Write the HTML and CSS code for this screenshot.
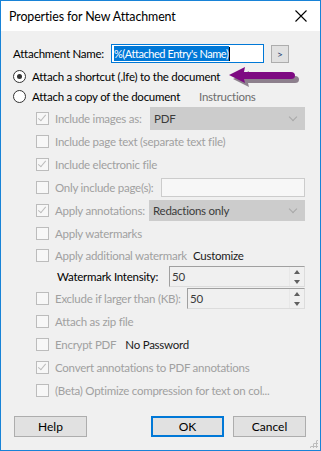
FILE: index.html
```html
<!DOCTYPE html>
<html lang="en">
<head>
    <meta charset="UTF-8">
    <meta name="viewport" content="width=device-width, initial-scale=1.0">
    <title>Properties for New Attachment</title>
    <link rel="stylesheet" href="styles.css">
</head>
<body>
    <div class="window">
        <div class="titlebar">
            <span class="title">Properties for New Attachment</span>
            <svg class="close" width="12" height="12" viewBox="0 0 12 12">
                <path d="M0.5 0.5 L11.5 11.5 M11.5 0.5 L0.5 11.5" stroke="#000" stroke-width="1.1" fill="none"/>
            </svg>
        </div>
        <div class="content">
            <div class="name-row">
                <label class="name-label">Attachment Name:</label>
                <div class="name-input"><span class="selected">%(Attached Entry's Name)</span><span class="caret"></span></div>
                <button class="small-btn">&gt;</button>
            </div>

            <div class="radio-row first">
                <span class="radio checked"></span>
                <span>Attach a shortcut (.lfe) to the document</span>
                <svg class="arrow" width="76" height="24" viewBox="0 0 76 24">
                    <path d="M4 12 L20 4 L19 9 L66 9 Q70 9 70 12.5 Q70 16 66 16 L19 16 L20 20 Z" fill="#2a102a" opacity="0.5" transform="translate(2 2)"/>
                    <path d="M2 10 L18 2 L17 7 L64 7 Q68 7 68 10.5 Q68 14 64 14 L17 14 L18 18 Z" fill="#7e0a82"/>
                </svg>
            </div>
            <div class="radio-row">
                <span class="radio"></span>
                <span>Attach a copy of the document</span>
                <span class="link-gray">Instructions</span>
            </div>

            <div class="options">
                <div class="opt h23">
                    <span class="check on"></span>
                    <span class="dis w-images">Include images as:</span>
                    <div class="combo c-images">PDF<span class="chev"></span></div>
                </div>
                <div class="opt h23">
                    <span class="check"></span>
                    <span class="dis">Include page text (separate text file)</span>
                </div>
                <div class="opt h23">
                    <span class="check on"></span>
                    <span class="dis">Include electronic file</span>
                </div>
                <div class="opt h23">
                    <span class="check"></span>
                    <span class="dis w-pages">Only include page(s):</span>
                    <div class="textbox"></div>
                </div>
                <div class="opt h23">
                    <span class="check on"></span>
                    <span class="dis w-annot">Apply annotations:</span>
                    <div class="combo">Redactions only<span class="chev"></span></div>
                </div>
                <div class="opt h23">
                    <span class="check"></span>
                    <span class="dis">Apply watermarks</span>
                </div>
                <div class="opt h21">
                    <span class="check"></span>
                    <span class="dis">Apply additional watermark</span>
                    <span class="link-dark cust">Customize</span>
                </div>
                <div class="opt h21 indent">
                    <span class="plain w-intensity">Watermark Intensity:</span>
                    <div class="spin">50<span class="spin-btns"><i class="up"></i><i class="down"></i></span></div>
                </div>
                <div class="opt h23">
                    <span class="check"></span>
                    <span class="dis w-exclude">Exclude if larger than (KB):</span>
                    <div class="spin">50<span class="spin-btns"><i class="up"></i><i class="down"></i></span></div>
                </div>
                <div class="opt h23">
                    <span class="check"></span>
                    <span class="dis">Attach as zip file</span>
                </div>
                <div class="opt h23">
                    <span class="check"></span>
                    <span class="dis">Encrypt PDF</span>
                    <span class="link-dark pw">No Password</span>
                </div>
                <div class="opt h23">
                    <span class="check on"></span>
                    <span class="dis">Convert annotations to PDF annotations</span>
                </div>
                <div class="opt h23">
                    <span class="check"></span>
                    <span class="dis">(Beta) Optimize compression for text on col...</span>
                </div>
            </div>

            <div class="buttons">
                <button class="btn">Help</button>
                <span class="spacer"></span>
                <button class="btn ok">OK</button>
                <button class="btn">Cancel</button>
            </div>
            <div class="grip"></div>
        </div>
    </div>
</body>
</html>
```

FILE: styles.css
```css
body {
    margin: 0;
    padding: 0;
    font-family: Lato, "Open Sans", sans-serif;
    font-size: 11.5px;
    letter-spacing: -0.25px;
    background-color: #f0f0f0;
    white-space: nowrap;
}

.window {
    width: 321px;
    height: 451px;
    box-sizing: border-box;
    border: 1px solid #1883d7;
    display: flex;
    flex-direction: column;
    position: relative;
}

.titlebar {
    height: 30px;
    background-color: #fff;
    display: flex;
    align-items: center;
    padding: 0 13px 0 8px;
    flex-shrink: 0;
}

.title {
    flex: 1;
    font-size: 12.4px;
    letter-spacing: -0.1px;
    color: #000;
}

.close {
    display: block;
}

.content {
    flex: 1;
    background-color: #f0f0f0;
    padding: 12px 0 0 12px;
    color: #000;
}

.name-row {
    height: 21px;
    display: flex;
    align-items: center;
}

.name-label {
    width: 98px;
    flex-shrink: 0;
}

.name-input {
    width: 149px;
    height: 17px;
    border: 1px solid #0078d7;
    background-color: #fff;
    display: flex;
    align-items: center;
    padding-left: 2px;
}

.selected {
    background-color: #0078d7;
    color: #fff;
    line-height: 15px;
    font-size: 11px;
    letter-spacing: -0.45px;
    padding-right: 1px;
}

.caret {
    width: 1px;
    height: 14px;
    background-color: #000;
}

.small-btn {
    margin-left: 7px;
    width: 18px;
    height: 18px;
    padding: 0;
    border: 1px solid #adadad;
    background-color: #e1e1e1;
    font-family: inherit;
    font-size: 10px;
    color: #1a3c6e;
}

.radio-row {
    height: 20px;
    display: flex;
    align-items: center;
    position: relative;
}

.radio-row.first {
    margin-top: 2px;
}

.radio {
    width: 11px;
    height: 11px;
    border: 1px solid #333;
    border-radius: 50%;
    background-color: #fff;
    margin-right: 6px;
    position: relative;
    flex-shrink: 0;
}

.radio.checked::after {
    content: "";
    position: absolute;
    left: 3px;
    top: 3px;
    width: 5px;
    height: 5px;
    border-radius: 50%;
    background-color: #333;
}

.arrow {
    position: absolute;
    left: 214px;
    top: -1px;
}

.link-gray {
    color: #6d6d6d;
    margin-left: 19px;
}

.options {
    padding-left: 23px;
    padding-right: 15px;
    margin-top: 1px;
}

.opt {
    display: flex;
    align-items: center;
}

.h23 {
    height: 23px;
}

.h21 {
    height: 21px;
}

.indent {
    padding-left: 21px;
}

.check {
    width: 11px;
    height: 11px;
    border: 1px solid #bcbcbc;
    background-color: #f7f7f7;
    margin-right: 6px;
    flex-shrink: 0;
    position: relative;
}

.check.on::after {
    content: "";
    position: absolute;
    left: 3px;
    top: 0px;
    width: 3px;
    height: 7px;
    border: solid #bcbcbc;
    border-width: 0 1.5px 1.5px 0;
    transform: rotate(40deg);
}

.dis {
    color: #a0a0a0;
}

.plain {
    color: #000;
}

.link-dark {
    color: #1a1a1a;
    margin-left: 10px;
}

.cust {
    margin-left: 6px;
}

.pw {
    margin-left: 9px;
}

.w-images {
    width: 95px;
    flex-shrink: 0;
}

.w-pages {
    width: 106px;
    flex-shrink: 0;
}

.w-annot {
    width: 94px;
    flex-shrink: 0;
}

.w-intensity {
    width: 112px;
    flex-shrink: 0;
}

.w-exclude {
    width: 132px;
    flex-shrink: 0;
}

.combo {
    flex: 1;
    height: 21px;
    box-sizing: border-box;
    border: 1px solid #cccccc;
    background-color: #cccccc;
    color: #3b3b3b;
    display: flex;
    align-items: center;
    padding-left: 3px;
    position: relative;
}

.c-images {
    height: 23px;
}

.chev {
    position: absolute;
    right: 8px;
    top: 50%;
    width: 5px;
    height: 5px;
    margin-top: -5px;
    border: solid #a8a8a8;
    border-width: 0 1px 1px 0;
    transform: rotate(45deg);
}

.textbox {
    flex: 1;
    height: 19px;
    box-sizing: border-box;
    border: 1px solid #cccccc;
    background-color: #f7f7f7;
}

.spin {
    flex: 1;
    height: 21px;
    box-sizing: border-box;
    border: 1px solid #a0a0a0;
    border-right-color: #dcdcdc;
    border-bottom-color: #dcdcdc;
    background-color: #f0f0f0;
    display: flex;
    align-items: center;
    padding-left: 2px;
    position: relative;
    color: #3b3b3b;
}

.spin-btns {
    position: absolute;
    right: 0;
    top: 0;
    bottom: 0;
    width: 15px;
    display: flex;
    flex-direction: column;
}

.spin-btns i {
    flex: 1;
    position: relative;
    border-left: 1px solid #e8e8e8;
}

.spin-btns i::after {
    content: "";
    position: absolute;
    left: 4px;
    top: 3px;
    border-left: 3.5px solid transparent;
    border-right: 3.5px solid transparent;
}

.spin-btns .up::after {
    border-bottom: 4px solid #606060;
}

.spin-btns .down::after {
    border-top: 4px solid #606060;
}

.buttons {
    display: flex;
    margin-top: 14px;
    padding-right: 14px;
    padding-left: 1px;
}

.spacer {
    flex: 1;
}

.btn {
    width: 73px;
    height: 21px;
    border: 1px solid #adadad;
    background-color: #e1e1e1;
    font-family: inherit;
    font-size: 12px;
    color: #000;
    padding: 0;
}

.btn.ok {
    border: 2px solid #0078d7;
    margin-right: 9px;
}

.grip {
    position: absolute;
    right: 2px;
    bottom: 2px;
    width: 9px;
    height: 9px;
    background-image: radial-gradient(circle, #bdbdbd 1px, transparent 1.2px);
    background-size: 3px 3px;
    clip-path: polygon(100% 0, 100% 100%, 0 100%);
}
```
